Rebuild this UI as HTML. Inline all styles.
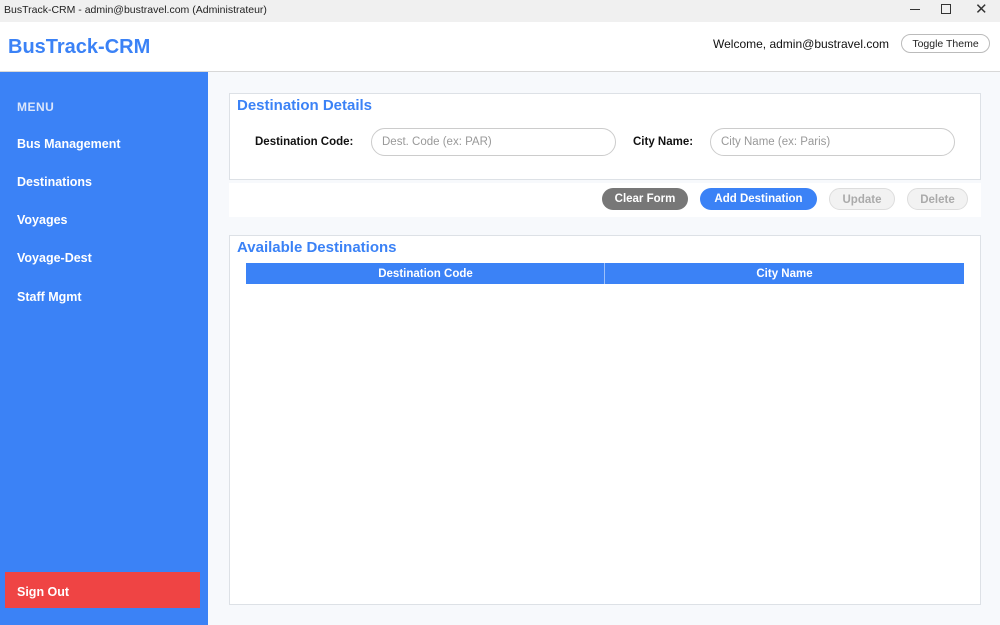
<!DOCTYPE html>
<html><head><meta charset="utf-8"><style>
*{box-sizing:border-box;margin:0;padding:0}
body{width:1000px;height:625px;overflow:hidden;font-family:"Liberation Sans",sans-serif;background:#f7f9fc;position:relative}
.a{position:absolute}
.tb{left:0;top:0;width:1000px;height:22px;background:#f0f0f0;font-size:10.5px;color:#222;padding:4px 0 0 4px}
.hd{left:0;top:22px;width:1000px;height:50px;background:#fff;border-bottom:1px solid #d8d8d8}
.side{left:0;top:72px;width:208px;height:553px;background:#3b82f6}
.nav{left:17px;color:#fff;font-weight:bold;font-size:12.5px}
.box{background:#fff;border:1px solid #dde1e6}
h2{font-size:15px;color:#3b82f6;font-weight:bold}
.lbl{font-size:11.5px;font-weight:bold;color:#111}
.inp{border:1px solid #ccc;border-radius:14px;height:28px;background:#fff;color:#999;font-size:11.5px;padding:7px 10px}
.btn{border-radius:11px;height:22px;font-size:11.5px;font-weight:bold;text-align:center;padding-top:5px;line-height:12px}
</style></head><body>
<div class="a tb">BusTrack-CRM - admin@bustravel.com (Administrateur)</div>
<div class="a" style="left:910px;top:9px;width:10px;height:1px;background:#333"></div>
<div class="a" style="left:941px;top:4px;width:10px;height:10px;border:1px solid #333"></div>
<div class="a" style="left:975px;top:0px;font-size:15px;color:#333">✕</div>
<div class="a hd"></div>
<div class="a" style="left:8px;top:36px;font-size:20px;font-weight:bold;color:#3b82f6">BusTrack-CRM</div>
<div class="a" style="left:713px;top:37px;font-size:12px;color:#111">Welcome, admin@bustravel.com</div>
<div class="a" style="left:901px;top:34px;width:89px;height:19px;border:1px solid #bbb;border-radius:10px;font-size:10.5px;text-align:center;padding-top:3px;color:#222">Toggle Theme</div>
<div class="a side"></div>
<div class="a" style="left:17px;top:100px;color:#dbe6fb;font-weight:bold;font-size:12px;letter-spacing:.5px">MENU</div>
<div class="a nav" style="top:137px">Bus Management</div>
<div class="a nav" style="top:175px">Destinations</div>
<div class="a nav" style="top:213px">Voyages</div>
<div class="a nav" style="top:251px">Voyage-Dest</div>
<div class="a nav" style="top:290px">Staff Mgmt</div>
<div class="a" style="left:5px;top:572px;width:195px;height:36px;background:#ef4444"></div>
<div class="a nav" style="top:585px">Sign Out</div>
<div class="a box" style="left:229px;top:93px;width:752px;height:87px"></div>
<h2 class="a" style="left:237px;top:97px">Destination Details</h2>
<div class="a lbl" style="left:255px;top:136px">Destination Code:</div>
<div class="a inp" style="left:371px;top:128px;width:245px">Dest. Code (ex: PAR)</div>
<div class="a lbl" style="left:633px;top:136px">City Name:</div>
<div class="a inp" style="left:710px;top:128px;width:245px">City Name (ex: Paris)</div>
<div class="a" style="left:229px;top:183px;width:752px;height:34px;background:#fff"></div>
<div class="a btn" style="left:602px;top:188px;width:86px;background:#777;color:#fff">Clear Form</div>
<div class="a btn" style="left:700px;top:188px;width:117px;background:#3b82f6;color:#fff">Add Destination</div>
<div class="a btn" style="left:829px;top:188px;width:66px;background:#f2f2f2;border:1px solid #ddd;color:#aaa">Update</div>
<div class="a btn" style="left:907px;top:188px;width:61px;background:#f2f2f2;border:1px solid #ddd;color:#aaa">Delete</div>
<div class="a box" style="left:229px;top:235px;width:752px;height:370px"></div>
<h2 class="a" style="left:237px;top:239px">Available Destinations</h2>
<div class="a" style="left:246px;top:263px;width:718px;height:21px;background:#3b82f6;color:#fff;font-size:11.5px;font-weight:bold;line-height:12px">
<div class="a" style="left:0;top:5px;width:359px;text-align:center">Destination Code</div>
<div class="a" style="left:358px;top:0;width:1px;height:21px;background:#9cc0fa"></div>
<div class="a" style="left:359px;top:5px;width:359px;text-align:center">City Name</div>
</div>
</body></html>
